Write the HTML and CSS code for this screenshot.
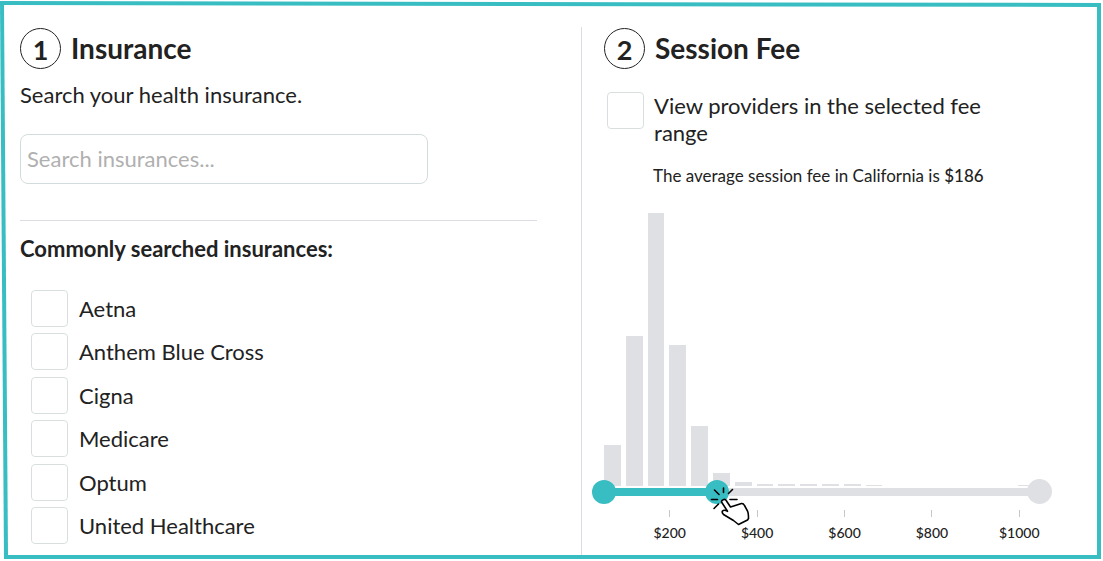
FILE: index.html
```html
<!DOCTYPE html>
<html lang="en">
<head>
  <meta charset="UTF-8">
  <meta name="viewport" content="width=device-width, initial-scale=1.0">
  <title>Find a Provider</title>
  <link rel="stylesheet" href="styles.css">
</head>
<body>

  <div class="frame">
    <form class="filters">

      <section class="insurance">
        <h2><span class="step">1</span>Insurance</h2>
        <label class="intro" for="search">Search your health insurance.</label>
        <input type="text" id="search" class="search" placeholder="Search insurances...">

        <hr>

        <h3>Commonly searched insurances:</h3>
        <div class="options">
          <label class="option"><input type="checkbox" name="aetna">Aetna</label>
          <label class="option"><input type="checkbox" name="anthem">Anthem Blue Cross</label>
          <label class="option"><input type="checkbox" name="cigna">Cigna</label>
          <label class="option"><input type="checkbox" name="medicare">Medicare</label>
          <label class="option"><input type="checkbox" name="optum">Optum</label>
          <label class="option"><input type="checkbox" name="united">United Healthcare</label>
        </div>
      </section>

      <section class="fee">
        <h2><span class="step">2</span>Session Fee</h2>
        <label class="fee-toggle">
          <input type="checkbox" name="fee-range">
          <span>View providers in the selected fee range</span>
        </label>
        <p class="average">The average session fee in California is <strong>$186</strong></p>

        <div class="chart">
          <div class="bars">
            <div class="bar" style="height: 41px"></div>
            <div class="bar" style="height: 150px"></div>
            <div class="bar" style="height: 273px"></div>
            <div class="bar" style="height: 141px"></div>
            <div class="bar" style="height: 60px"></div>
            <div class="bar" style="height: 13px"></div>
            <div class="bar" style="height: 4px"></div>
            <div class="bar" style="height: 2px"></div>
            <div class="bar" style="height: 2px"></div>
            <div class="bar" style="height: 2px"></div>
            <div class="bar" style="height: 2px"></div>
            <div class="bar" style="height: 2px"></div>
            <div class="bar" style="height: 1px"></div>
            <div class="bar" style="height: 0"></div>
            <div class="bar" style="height: 0"></div>
            <div class="bar" style="height: 0"></div>
            <div class="bar" style="height: 0"></div>
            <div class="bar" style="height: 0"></div>
            <div class="bar" style="height: 0"></div>
            <div class="bar" style="height: 1px"></div>
          </div>

          <div class="slider">
            <div class="track">
              <div class="selected" style="width: 26%"></div>
            </div>
            <div class="end"></div>
            <input type="range" aria-label="Minimum fee" min="50" max="1050" value="50">
            <input type="range" aria-label="Maximum fee" min="50" max="1050" value="309">
            <svg class="pointer" viewBox="0 0 40 42" fill="none" stroke="#000" stroke-width="1.6" stroke-linecap="round" stroke-linejoin="round" aria-hidden="true">
              <path d="M2.500 5L7 9.500M11.500 3v4.500M20.500 4.500l-4 4M-.5 14.500h6M18 14.500h7M6.500 19L2 23.500"/>
              <path fill="#fff" d="M9.700 17.200C9 15 13 13 14.500 16L18.500 22L29.500 18.500Q31.500 18.300 32.500 20.500L35.500 26Q36.500 28 36.500 33.500L35.500 35L26.500 39.500L21.500 35.500L11.500 29.500Q9.500 27.500 10.500 26Q12 24.500 15.500 26.300Z"/>
            </svg>
          </div>

          <div class="scale">
            <span>$200</span>
            <span>$400</span>
            <span>$600</span>
            <span>$800</span>
            <span>$1000</span>
          </div>
        </div>
      </section>

    </form>
  </div>

</body>
</html>
```
FILE: styles.css
```css
* {
  box-sizing: border-box;
}

body {
  margin: 0;
  font-family: Lato, sans-serif;
  font-size: 22px;
  color: #222;
  background: #fff;
}

/* hand-drawn looking border: both shapes lean a little */
.frame {
  background: #38bdc2;
  clip-path: polygon(0 1px, calc(100% - 2px) 3px, calc(100% - 2px) calc(100% - 2px), 4px calc(100% - 2px));
}

.filters {
  display: grid;
  grid-template-columns: 10fr 9fr;
  min-height: 100vh;
  padding: 27px 17px 6px 20px;
  background: #fff;
  clip-path: polygon(4px 5px, calc(100% - 6px) 7px, calc(100% - 6px) calc(100% - 6px), 8px calc(100% - 6px));
}

h2 {
  display: flex;
  align-items: center;
  gap: 10px;
  margin: 0;
  font-size: 28px;
  line-height: 42px;
}

.step {
  width: 41px;
  height: 41px;
  border: 1px solid #222;
  border-radius: 50%;
  font-size: 27px;
  line-height: 41px;
  text-align: center;
}

.insurance {
  display: flex;
  flex-direction: column;
  padding: 0 44px 11px 0;
}

.intro {
  margin-top: 12px;
  line-height: 27px;
}

.search {
  width: 79%;
  height: 50px;
  margin-top: 26px;
  padding: 0 6px 2px;
  border: 1px solid #d3dcdc;
  border-radius: 8px;
  font: inherit;
}

.search::placeholder {
  color: #b0b0b0;
}

hr {
  width: 100%;
  margin: 36px 0 0;
  border: 0;
  border-top: 1px solid #dcdde4;
}

h3 {
  margin: 14px 0 0;
  font-size: 22px;
  line-height: 27px;
}

.options {
  flex: 1;
  display: flex;
  flex-direction: column;
  justify-content: space-between;
  padding: 28px 0 0 11px;
}

.option {
  display: flex;
  align-items: center;
  gap: 11px;
}

input[type="checkbox"] {
  appearance: none;
  flex: none;
  width: 37px;
  height: 37px;
  margin: 0;
  border: 1px solid #d9dfdf;
  border-radius: 4px;
  background: #fff;
}

input[type="checkbox"]:checked {
  background: #38bdc2;
}

.fee {
  display: flex;
  flex-direction: column;
  padding: 0 34px 0 10px;
  border-left: 1px solid #dcdde4;
}

.fee h2 {
  margin-left: 12px;
}

.fee-toggle {
  display: flex;
  gap: 10px;
  max-width: 400px;
  margin: 23px 0 0 15px;
  line-height: 27px;
}

.average {
  margin: 20px 0 0 61px;
  font-size: 17px;
  line-height: 20px;
}

.average strong {
  font-weight: 500;
}

.chart {
  margin-top: 27px;
}

.bars {
  display: flex;
  align-items: flex-end;
  gap: 5px;
  padding: 0 17px 0 12px;
}

.bar {
  flex: 1;
  background: #dfe0e4;
}

/* track, end stop and both inputs share one cell */
.slider {
  position: relative;
  display: grid;
  align-items: center;
  height: 24px;
  margin-top: -7px;
}

.track,
.end,
.slider input {
  grid-area: 1 / 1;
}

.track {
  height: 8px;
  margin: 0 12px;
  background: #dfe0e4;
}

.selected {
  height: 8px;
  background: #38bdc2;
}

.end {
  justify-self: end;
  width: 25px;
  height: 25px;
  border-radius: 50%;
  background: #dfe0e4;
}

.slider input {
  appearance: none;
  width: 100%;
  height: 24px;
  margin: 0;
  background: none;
  pointer-events: none;
}

.slider input::-webkit-slider-thumb {
  appearance: none;
  width: 24px;
  height: 24px;
  border-radius: 50%;
  background: #38bdc2;
  pointer-events: auto;
}

.pointer {
  position: absolute;
  top: 6px;
  left: 26%;
  width: 40px;
  height: 42px;
  overflow: visible;
  pointer-events: none;
}

.scale {
  display: grid;
  grid-template-columns: repeat(5, 1fr);
  margin: 7px -11px 0 34px;
  font-size: 14px;
  font-weight: 500;
  line-height: 18px;
  text-align: center;
}

.scale span::before {
  content: "";
  display: block;
  width: 1px;
  height: 7px;
  margin: 0 auto 7px;
  background: #c8c8c8;
}
```
